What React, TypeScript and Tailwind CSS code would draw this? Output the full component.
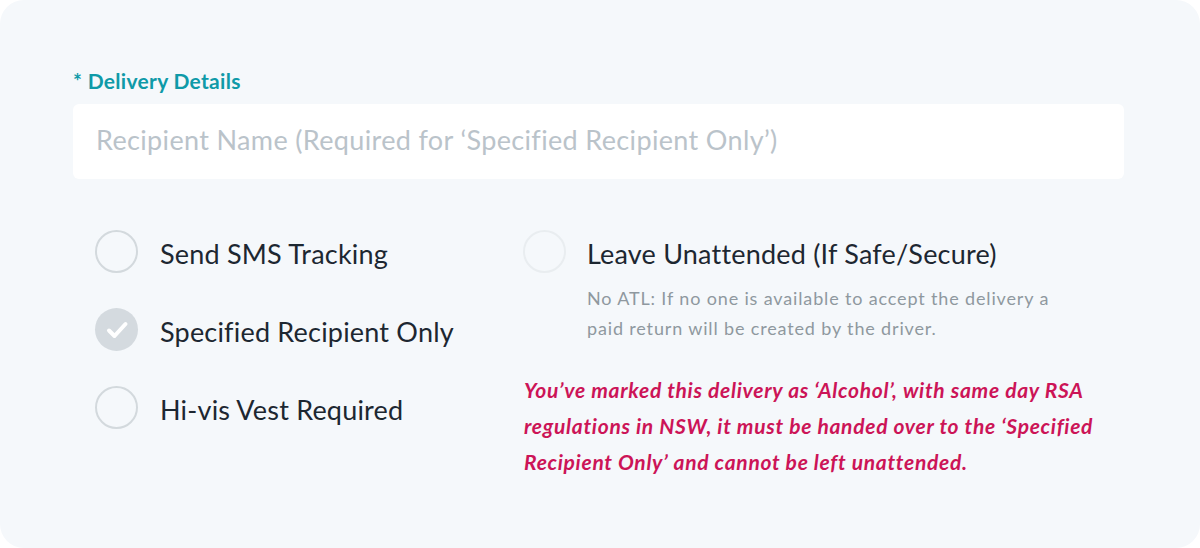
const font = { fontFamily: "Lato, 'Noto Sans', sans-serif" };

interface Option {
  label: string;
  checked?: boolean;
}

const leftOptions: Option[] = [
  { label: "Send SMS Tracking" },
  { label: "Specified Recipient Only", checked: true },
  { label: "Hi-vis Vest Required" },
];

const Circle = ({ checked, faded }: { checked?: boolean; faded?: boolean }) => {
  if (checked) {
    return (
      <span className="flex h-[43px] w-[43px] shrink-0 items-center justify-center rounded-full bg-[#d4dadf]">
        <svg width="30" height="30" viewBox="0 0 30 30" fill="none">
          <path d="M7 15.5l5.5 5.5L23.5 9" stroke="white" strokeWidth={4} strokeLinecap="round" strokeLinejoin="round" />
        </svg>
      </span>
    );
  }
  return (
    <span
      className={`block h-[43px] w-[43px] shrink-0 rounded-full border-2 ${
        faded ? "border-[#e9edf0]" : "border-[#d3d9dd]"
      } bg-transparent`}
    />
  );
};

export default function App() {
  return (
    <div className="h-[548px] w-[1200px] bg-white" style={font}>
      <div className="h-full w-full rounded-[24px] bg-[#f5f8fb] pl-[73px] pr-[76px] pt-[69px]">
        <div className="text-[21px] font-bold leading-[24px] tracking-[0.3px] text-[#0f9aa8]">* Delivery Details</div>

        <div className="mt-[11px] flex h-[75px] items-center rounded-[6px] bg-white pb-[5px] pl-[23px]">
          <span className="text-[27px] leading-none tracking-[0.35px] text-[#bac3ca]">
            Recipient Name (Required for ‘Specified Recipient Only’)
          </span>
        </div>

        <div className="mt-[51px] flex">
          {/* Left options */}
          <div className="ml-[22px] flex w-[428px] flex-col gap-[35px]">
            {leftOptions.map((o) => (
              <label key={o.label} className="flex h-[43px] items-center gap-[22px]">
                <Circle checked={o.checked} />
                <span className="pt-[3px] text-[27px] leading-none tracking-[0.2px] text-[#1d2731]">{o.label}</span>
              </label>
            ))}
          </div>

          {/* Right column */}
          <div className="flex flex-col">
            <label className="flex h-[43px] items-center gap-[21px]">
              <Circle faded />
              <span className="pt-[3px] text-[27px] leading-none tracking-[0.2px] text-[#1d2731]">
                Leave Unattended (If Safe/Secure)
              </span>
            </label>
            <p className="ml-[64px] mt-[10px] w-[480px] text-[18px] leading-[30px] tracking-[0.85px] text-[#8f989f]">
              No ATL: If no one is available to accept the delivery a paid return will be created by the driver.
            </p>
            <p className="ml-px mt-[29px] w-[590px] text-[21px] font-bold italic leading-[36px] tracking-[0.7px] text-[#cc1457]">
              You’ve marked this delivery as ‘Alcohol’, with same day RSA regulations in NSW, it must be handed over
              to the ‘Specified Recipient Only’ and cannot be left unattended.
            </p>
          </div>
        </div>
      </div>
    </div>
  );
}
